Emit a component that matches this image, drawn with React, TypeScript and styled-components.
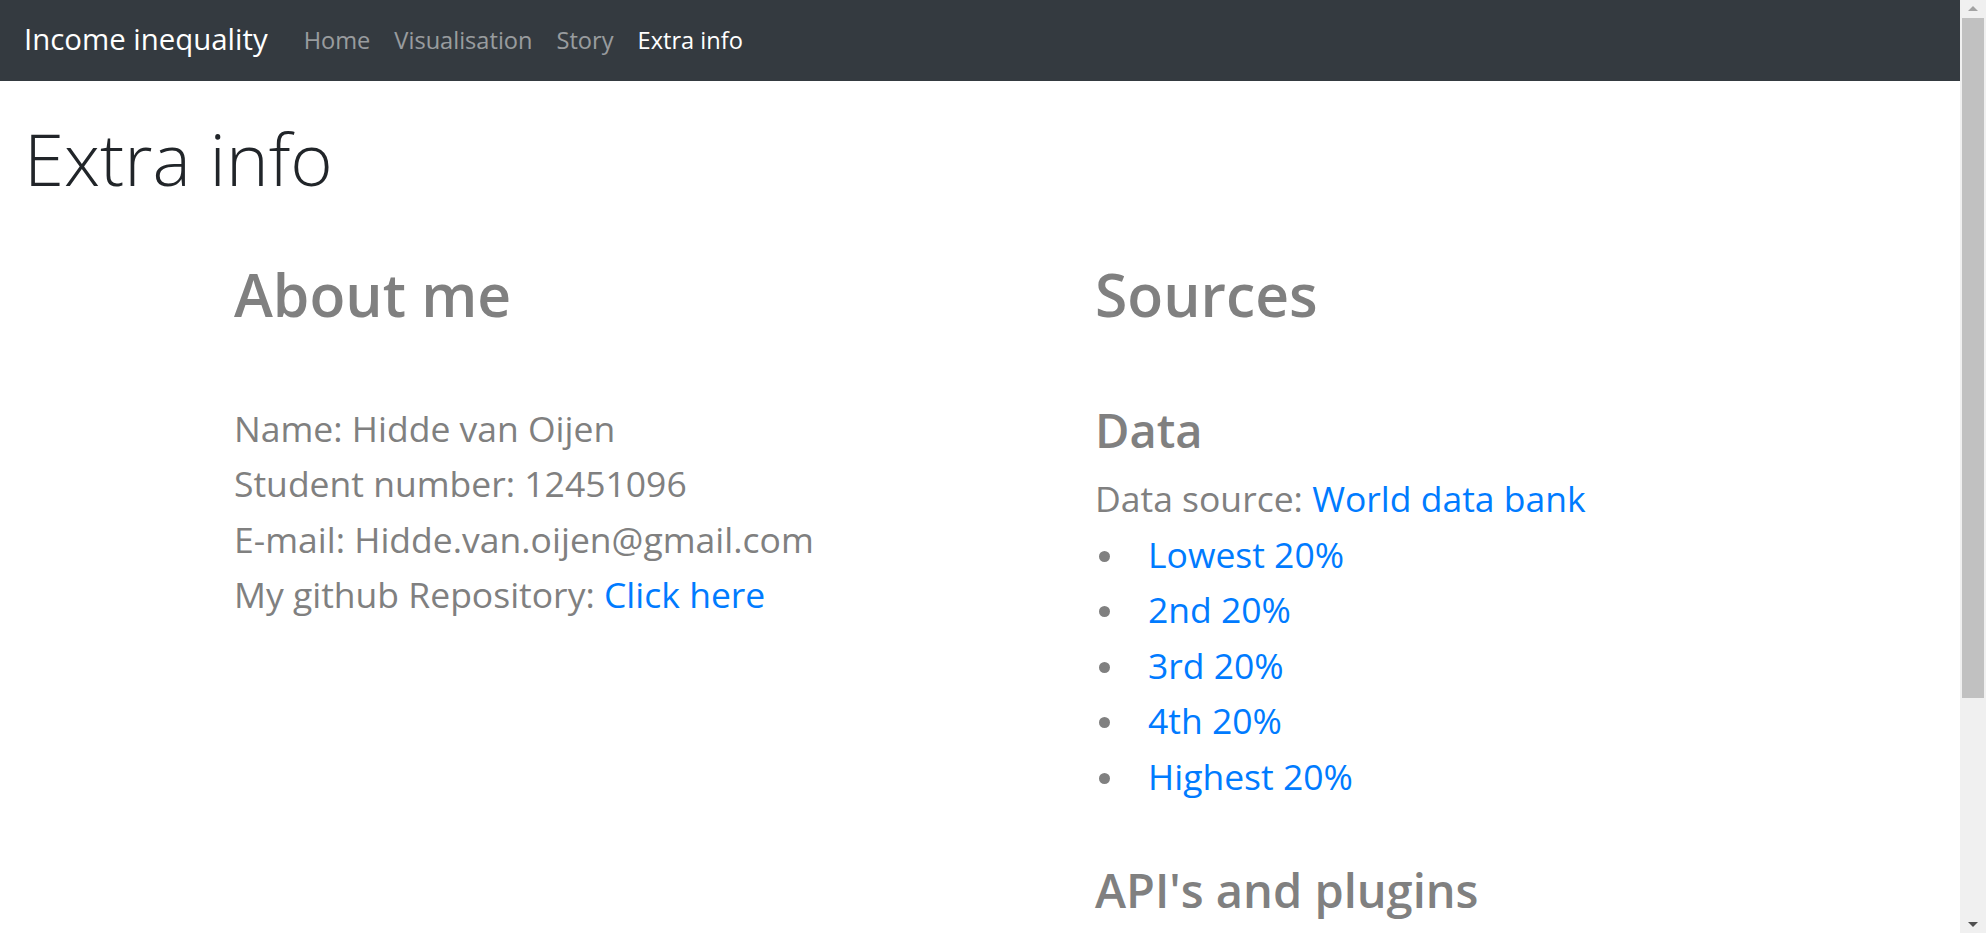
import React from "react";
import styled, { createGlobalStyle } from "styled-components";

const GlobalStyle = createGlobalStyle`
  body {
    margin: 0;
    background: #fff;
    font-family: "Open Sans", "Noto Sans", sans-serif;
    color: #212529;
  }
  * { box-sizing: border-box; }
`;

const Frame = styled.div`
  display: flex;
  height: 100vh;
`;

const Viewport = styled.div`
  flex: 1;
  overflow-y: auto;
  scrollbar-width: none;
`;

// classic Windows-style scrollbar rail on the right of the window
const ScrollRail = styled.div`
  display: flex;
  flex-direction: column;
  width: 26px;
  flex: none;
  background: #f0f0f0;
`;

const RailButton = styled.div`
  display: flex;
  align-items: center;
  justify-content: center;
  height: 17px;
  flex: none;
`;

const Arrow = styled.span<{ $down?: boolean }>`
  width: 0;
  height: 0;
  border-left: 5.5px solid transparent;
  border-right: 5.5px solid transparent;
  ${(p) =>
    p.$down
      ? "border-top: 5px solid #505050;"
      : "border-bottom: 5px solid #a3a3a3;"}
`;

const Track = styled.div`
  flex: 1;
  padding: 1px 2px 0;
`;

const Thumb = styled.div`
  height: 680px;
  background: #c1c1c1;
`;

const Page = styled.div`
  min-height: 1233px;
`;

const Navbar = styled.nav`
  display: flex;
  align-items: center;
  height: 81px;
  padding: 0 24px 2px;
  background-color: #343a40;
`;

const Brand = styled.a`
  font-size: 29.4px;
  line-height: 45px;
  color: #fff;
  margin-right: 24px;
  text-decoration: none;
  white-space: nowrap;
`;

const NavList = styled.ul`
  display: flex;
  list-style: none;
  margin: 0;
  padding: 0;
`;

const NavLink = styled.a<{ $active?: boolean }>`
  display: block;
  padding: 0 12px;
  font-size: 23.6px;
  line-height: 36px;
  color: ${(p) => (p.$active ? "#fff" : "rgba(255, 255, 255, 0.5)")};
  text-decoration: none;
`;

const Main = styled.main`
  padding: 0 24px;
`;

const PageTitle = styled.h1`
  margin: 35px 0 59px;
  font-size: 72.4px;
  font-weight: 300;
  line-height: 84px;
  color: #212529;
`;

const Columns = styled.div`
  display: grid;
  grid-template-columns: 861px 1fr;
  padding-left: 210px;
  color: gray;
`;

const Column = styled.section`
  display: flex;
  flex-direction: column;
  align-items: flex-start;
`;

const SectionHeading = styled.h1`
  margin: 0 0 77px;
  font-size: 58.8px;
  font-weight: 600;
  line-height: 70.8px;
`;

const SubHeading = styled.h3`
  margin: 0 0 23.5px;
  font-size: 47px;
  font-weight: 600;
  line-height: 47px;
`;

const Line = styled.h4`
  margin: 0 0 12.3px;
  font-size: 35.5px;
  font-weight: 400;
  line-height: 43.2px;
  white-space: nowrap;
`;

const Link = styled.a`
  color: #007bff;
  text-decoration: none;
`;

const BulletList = styled.ul`
  list-style: none;
  margin: 0 0 56.5px;
  padding: 0;
`;

const Bullet = styled.li`
  display: flex;
  align-items: center;
  gap: 38px;
  margin: 0 0 12.3px;
  font-size: 35.5px;
  line-height: 43.2px;

  &::before {
    content: "";
    flex: none;
    width: 11px;
    height: 11px;
    margin-left: 4px;
    margin-top: 4px;
    border-radius: 50%;
    background: gray;
  }
`;

const navItems = ["Home", "Visualisation", "Story", "Extra info"];
const quintiles = ["Lowest 20%", "2nd 20%", "3rd 20%", "4th 20%", "Highest 20%"];

export default function App() {
  return (
    <Frame>
      <GlobalStyle />
      <Viewport>
        <Page>
          <Navbar>
            <Brand href="#">Income inequality</Brand>
            <NavList>
              {navItems.map((item) => (
                <li key={item}>
                  <NavLink href="#" $active={item === "Extra info"}>
                    {item}
                  </NavLink>
                </li>
              ))}
            </NavList>
          </Navbar>
          <Main>
            <PageTitle>Extra info</PageTitle>
            <Columns>
              <Column>
                <SectionHeading>About me</SectionHeading>
                <Line>Name: Hidde van Oijen</Line>
                <Line>Student number: 12451096</Line>
                <Line>E-mail: Hidde.van.oijen@gmail.com</Line>
                <Line>
                  My github Repository: <Link href="#">Click here</Link>
                </Line>
              </Column>
              <Column>
                <SectionHeading>Sources</SectionHeading>
                <SubHeading>Data</SubHeading>
                <Line>
                  Data source: <Link href="#">World data bank</Link>
                </Line>
                <BulletList>
                  {quintiles.map((q) => (
                    <Bullet key={q}>
                      <Link href="#">{q}</Link>
                    </Bullet>
                  ))}
                </BulletList>
                <SubHeading>API's and plugins</SubHeading>
              </Column>
            </Columns>
          </Main>
        </Page>
      </Viewport>
      <ScrollRail>
        <RailButton>
          <Arrow />
        </RailButton>
        <Track>
          <Thumb />
        </Track>
        <RailButton>
          <Arrow $down />
        </RailButton>
      </ScrollRail>
    </Frame>
  );
}
